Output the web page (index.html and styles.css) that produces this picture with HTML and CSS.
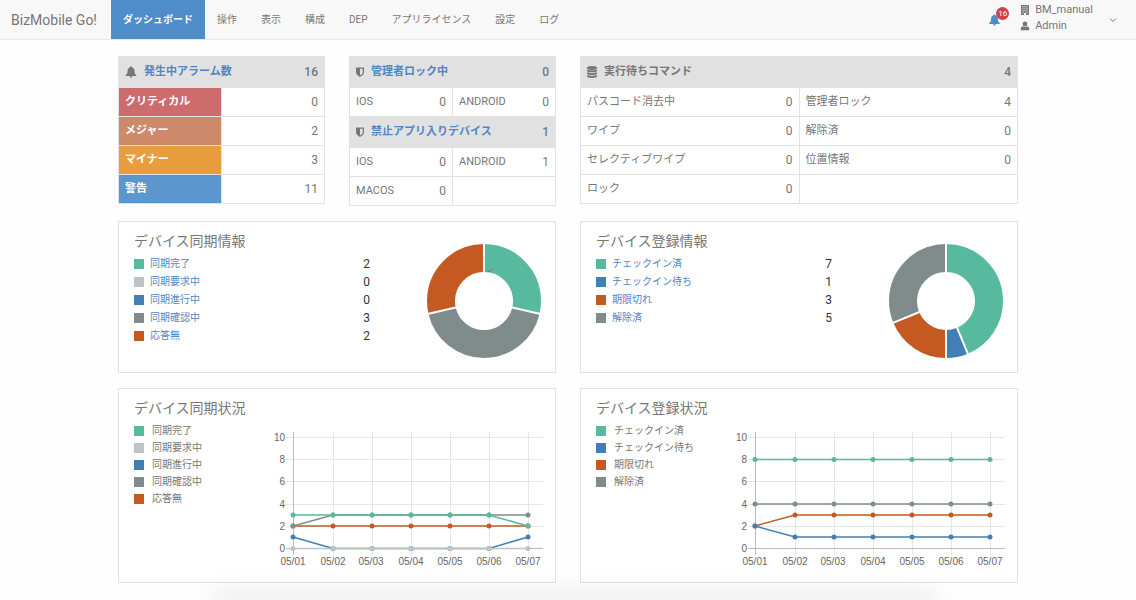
FILE: index.html
```html
<!DOCTYPE html>
<html lang="ja">
<head>
    <meta charset="UTF-8">
    <meta name="viewport" content="width=device-width, initial-scale=1.0">
    <title>BizMobile Go! ダッシュボード</title>
    <link rel="stylesheet" href="styles.css">
</head>
<body>
    <header class="header">
        <a href="#" class="brand">BizMobile Go!</a>
        <nav class="nav">
            <a href="#" class="active">ダッシュボード</a>
            <a href="#">操作</a>
            <a href="#">表示</a>
            <a href="#">構成</a>
            <a href="#">DEP</a>
            <a href="#">アプリライセンス</a>
            <a href="#">設定</a>
            <a href="#">ログ</a>
        </nav>
        <button type="button" class="bell" aria-label="アラーム">
            <svg width="11" height="12" viewBox="0 0 11 12"><path fill="#4f8cca" d="M5.5 0.3c.6 0 .9.4.9.9 1.7.4 2.5 1.700 2.500 3.400 0 2.200.5 3.500 1.900 4.600v.7H.2v-.7c1.400-1.100 1.900-2.400 1.900-4.600 0-1.700.8-3 2.500-3.400 0-.5.3-.9.9-.9zM4.100 10.300h2.800c0 .8-.6 1.400-1.400 1.400s-1.400-.6-1.400-1.400z"/></svg>
            <span class="badge">16</span>
        </button>
        <button type="button" class="user">
            <span class="user-names">
                <span class="user-row">
                    <svg width="10" height="10" viewBox="0 0 10 10"><path fill="#777" fill-rule="evenodd" d="M1 0h8v10H6V8H4v2H1zM2.500 1.200v1h1v-1zm2 0v1h1v-1zm2 0v1h1v-1zm-4 2v1h1v-1zm2 0v1h1v-1zm2 0v1h1v-1zm-4 2v1h1v-1zm2 0v1h1v-1zm2 0v1h1v-1zm-4 2v1h1v-1zm4 0v1h1v-1z"/></svg>
                    BM_manual
                </span>
                <span class="user-row">
                    <svg width="10" height="10" viewBox="0 0 10 10"><circle cx="5" cy="3" r="2.400" fill="#777"/><path fill="#777" d="M.8 9.300V7.800c0-1.500.9-2.500 2.200-2.500 1.200.9 2.800.9 4 0 1.300 0 2.200 1 2.200 2.500v1.500z"/></svg>
                    Admin
                </span>
            </span>
            <svg width="8" height="6" viewBox="0 0 8 6"><path d="M1 1.500l3 3 3-3" fill="none" stroke="#777"/></svg>
        </button>
    </header>

    <main class="dashboard">
        <div class="summary">
            <table class="counts alarms">
                <thead>
                    <tr>
                        <th scope="col" colspan="2">
                            <div class="head">
                                <svg width="12" height="12" viewBox="0 0 11 12"><path fill="#777" d="M5.5 0.3c.6 0 .9.4.9.9 1.7.4 2.5 1.700 2.500 3.400 0 2.200.5 3.500 1.900 4.600v.7H.2v-.7c1.400-1.100 1.900-2.400 1.900-4.600 0-1.700.8-3 2.500-3.400 0-.5.3-.9.9-.9zM4.100 10.300h2.800c0 .8-.6 1.400-1.400 1.400s-1.400-.6-1.400-1.400z"/></svg>
                                <a href="#">発生中アラーム数</a>
                                <span class="total">16</span>
                            </div>
                        </th>
                    </tr>
                </thead>
                <tbody>
                    <tr><th scope="row" class="critical">クリティカル</th><td class="num">0</td></tr>
                    <tr><th scope="row" class="major">メジャー</th><td class="num">2</td></tr>
                    <tr><th scope="row" class="minor">マイナー</th><td class="num">3</td></tr>
                    <tr><th scope="row" class="warning">警告</th><td class="num">11</td></tr>
                </tbody>
            </table>

            <table class="counts">
                <tbody>
                    <tr>
                        <th colspan="2">
                            <div class="head">
                                <svg width="8" height="10" viewBox="0 0 8 10"><path fill="#777" fill-rule="evenodd" d="M0 .5h8v4.800C8 7.600 6 9 4 10 2 9 0 7.600 0 5.300zM4 1.800v6.700c1.500-.9 2.700-1.800 2.700-3.200V1.800z"/></svg>
                                <a href="#">管理者ロック中</a>
                                <span class="total">0</span>
                            </div>
                        </th>
                    </tr>
                    <tr>
                        <td><div class="pair">IOS<span>0</span></div></td>
                        <td><div class="pair">ANDROID<span>0</span></div></td>
                    </tr>
                    <tr>
                        <th colspan="2">
                            <div class="head">
                                <svg width="8" height="10" viewBox="0 0 8 10"><path fill="#777" fill-rule="evenodd" d="M0 .5h8v4.800C8 7.600 6 9 4 10 2 9 0 7.600 0 5.300zM4 1.800v6.700c1.500-.9 2.700-1.800 2.700-3.200V1.800z"/></svg>
                                <a href="#">禁止アプリ入りデバイス</a>
                                <span class="total">1</span>
                            </div>
                        </th>
                    </tr>
                    <tr>
                        <td><div class="pair">IOS<span>0</span></div></td>
                        <td><div class="pair">ANDROID<span>1</span></div></td>
                    </tr>
                    <tr>
                        <td><div class="pair">MACOS<span>0</span></div></td>
                        <td></td>
                    </tr>
                </tbody>
            </table>
        </div>

        <table class="counts">
            <thead>
                <tr>
                    <th colspan="2">
                        <div class="head">
                            <svg width="10" height="12" viewBox="0 0 10 12"><g fill="#777"><ellipse cx="5" cy="2" rx="5" ry="1.900"/><path d="M0 3.200c1 1.500 9 1.500 10 0v1.500c0 2.100-10 2.100-10 0z"/><path d="M0 6c1 1.500 9 1.500 10 0v1.500c0 2.100-10 2.100-10 0z"/><path d="M0 8.800c1 1.500 9 1.500 10 0v1.500c0 2.100-10 2.100-10 0z"/></g></svg>
                            <span>実行待ちコマンド</span>
                            <span class="total">4</span>
                        </div>
                    </th>
                </tr>
            </thead>
            <tbody>
                <tr>
                    <td><div class="pair">パスコード消去中<span>0</span></div></td>
                    <td><div class="pair">管理者ロック<span>4</span></div></td>
                </tr>
                <tr>
                    <td><div class="pair">ワイプ<span>0</span></div></td>
                    <td><div class="pair">解除済<span>0</span></div></td>
                </tr>
                <tr>
                    <td><div class="pair">セレクティブワイプ<span>0</span></div></td>
                    <td><div class="pair">位置情報<span>0</span></div></td>
                </tr>
                <tr>
                    <td><div class="pair">ロック<span>0</span></div></td>
                    <td></td>
                </tr>
            </tbody>
        </table>

        <section class="panel">
            <div class="panel-text">
                <h2>デバイス同期情報</h2>
                <ul class="legend">
                    <li class="green"><a href="#">同期完了</a><span>2</span></li>
                    <li class="silver"><a href="#">同期要求中</a><span>0</span></li>
                    <li class="blue"><a href="#">同期進行中</a><span>0</span></li>
                    <li class="gray"><a href="#">同期確認中</a><span>3</span></li>
                    <li class="orange"><a href="#">応答無</a><span>2</span></li>
                </ul>
            </div>
            <svg class="donut" width="116" height="116" viewBox="-58 -58 116 116">
                <!-- pathLength = total devices -->
                <g transform="rotate(-90)" fill="none" stroke-width="28">
                    <circle r="43" pathLength="7" stroke="#57b99d" stroke-dasharray="2 5"/>
                    <circle r="43" pathLength="7" stroke="#808c8b" stroke-dasharray="3 4" stroke-dashoffset="-2"/>
                    <circle r="43" pathLength="7" stroke="#c45a22" stroke-dasharray="2 5" stroke-dashoffset="-5"/>
                </g>
                <g stroke="#fff" stroke-width="2">
                    <path d="M0-28V-58"/>
                    <path d="M0-28V-58" transform="rotate(102.857)"/>
                    <path d="M0-28V-58" transform="rotate(257.143)"/>
                </g>
            </svg>
        </section>

        <section class="panel">
            <div class="panel-text">
                <h2>デバイス登録情報</h2>
                <ul class="legend">
                    <li class="green"><a href="#">チェックイン済</a><span>7</span></li>
                    <li class="blue"><a href="#">チェックイン待ち</a><span>1</span></li>
                    <li class="orange"><a href="#">期限切れ</a><span>3</span></li>
                    <li class="gray"><a href="#">解除済</a><span>5</span></li>
                </ul>
            </div>
            <svg class="donut" width="116" height="116" viewBox="-58 -58 116 116">
                <g transform="rotate(-90)" fill="none" stroke-width="28">
                    <circle r="43" pathLength="16" stroke="#57b99d" stroke-dasharray="7 9"/>
                    <circle r="43" pathLength="16" stroke="#417fb5" stroke-dasharray="1 15" stroke-dashoffset="-7"/>
                    <circle r="43" pathLength="16" stroke="#c45a22" stroke-dasharray="3 13" stroke-dashoffset="-8"/>
                    <circle r="43" pathLength="16" stroke="#808c8b" stroke-dasharray="5 11" stroke-dashoffset="-11"/>
                </g>
                <g stroke="#fff" stroke-width="2">
                    <path d="M0-28V-58"/>
                    <path d="M0-28V-58" transform="rotate(157.5)"/>
                    <path d="M0-28V-58" transform="rotate(180)"/>
                    <path d="M0-28V-58" transform="rotate(247.5)"/>
                </g>
            </svg>
        </section>

        <section class="panel">
            <div class="panel-text">
                <h2>デバイス同期状況</h2>
                <ul class="legend series">
                    <li class="green">同期完了</li>
                    <li class="silver">同期要求中</li>
                    <li class="blue">同期進行中</li>
                    <li class="gray">同期確認中</li>
                    <li class="orange">応答無</li>
                </ul>
            </div>
            <svg class="chart" width="276" height="140" viewBox="0 0 276 140">
                <defs>
                    <g id="grid">
                        <path class="grid-line" d="M19 7.500H276M19 29.500H276M19 51.500H276M19 74.500H276M19 96.500H276M66.500 2V125M105.500 2V125M144.500 2V125M183.500 2V125M222.500 2V125M261.500 2V125"/>
                        <path class="axis" d="M26.500 2V125M19 118.500H276"/>
                        <g class="y-labels">
                            <text x="18" y="11">10</text>
                            <text x="18" y="33">8</text>
                            <text x="18" y="55">6</text>
                            <text x="18" y="78">4</text>
                            <text x="18" y="100">2</text>
                            <text x="18" y="122">0</text>
                        </g>
                        <g class="x-labels">
                            <text x="26" y="135">05/01</text>
                            <text x="66" y="135">05/02</text>
                            <text x="104" y="135">05/03</text>
                            <text x="144" y="135">05/04</text>
                            <text x="183" y="135">05/05</text>
                            <text x="222" y="135">05/06</text>
                            <text x="261" y="135">05/07</text>
                        </g>
                    </g>
                    <marker id="dot-green" markerUnits="userSpaceOnUse" markerWidth="6" markerHeight="6" refX="3" refY="3"><circle cx="3" cy="3" r="2.500" fill="#57b99d"/></marker>
                    <marker id="dot-silver" markerUnits="userSpaceOnUse" markerWidth="6" markerHeight="6" refX="3" refY="3"><circle cx="3" cy="3" r="2.500" fill="#bec3c7"/></marker>
                    <marker id="dot-blue" markerUnits="userSpaceOnUse" markerWidth="6" markerHeight="6" refX="3" refY="3"><circle cx="3" cy="3" r="2.500" fill="#417fb5"/></marker>
                    <marker id="dot-gray" markerUnits="userSpaceOnUse" markerWidth="6" markerHeight="6" refX="3" refY="3"><circle cx="3" cy="3" r="2.500" fill="#808c8b"/></marker>
                    <marker id="dot-orange" markerUnits="userSpaceOnUse" markerWidth="6" markerHeight="6" refX="3" refY="3"><circle cx="3" cy="3" r="2.500" fill="#c45a22"/></marker>
                </defs>
                <use href="#grid"/>
                <polyline class="line line-orange" points="26,96 66,96 105,96 144,96 183,96 222,96 261,96"/>
                <polyline class="line line-gray" points="26,96 66,85 105,85 144,85 183,85 222,85 261,85"/>
                <polyline class="line line-blue" points="26,107 66,118.500 105,118.500 144,118.500 183,118.500 222,118.500 261,107"/>
                <polyline class="line line-silver" points="26,118.500 66,118.500 105,118.500 144,118.500 183,118.500 222,118.500 261,118.500"/>
                <polyline class="line line-green" points="26,85 66,85 105,85 144,85 183,85 222,85 261,96"/>
            </svg>
        </section>

        <section class="panel">
            <div class="panel-text">
                <h2>デバイス登録状況</h2>
                <ul class="legend series">
                    <li class="green">チェックイン済</li>
                    <li class="blue">チェックイン待ち</li>
                    <li class="orange">期限切れ</li>
                    <li class="gray">解除済</li>
                </ul>
            </div>
            <svg class="chart" width="276" height="140" viewBox="0 0 276 140">
                <use href="#grid"/>
                <polyline class="line line-gray" points="26,74 66,74 105,74 144,74 183,74 222,74 261,74"/>
                <polyline class="line line-orange" points="26,96 66,85 105,85 144,85 183,85 222,85 261,85"/>
                <polyline class="line line-blue" points="26,96 66,107 105,107 144,107 183,107 222,107 261,107"/>
                <polyline class="line line-green" points="26,29.500 66,29.500 105,29.500 144,29.500 183,29.500 222,29.500 261,29.500"/>
            </svg>
        </section>
    </main>
    <div class="bottom-shadow"></div>
</body>
</html>
```

FILE: styles.css
```css
* {
    box-sizing: border-box;
}
body {
    margin: 0;
    background: #fefefe;
    color: #777;
    font-family: Roboto, "Noto Sans CJK JP", sans-serif;
    font-size: 11px;
    line-height: 16px;
}
a {
    color: #4f86c6;
    text-decoration: none;
}
svg {
    flex: none;
}
button {
    border: 0;
    padding: 0;
    background: none;
    color: inherit;
    font: inherit;
    cursor: pointer;
}

/* header */
.header {
    display: flex;
    align-items: center;
    height: 40px;
    padding-right: 19px;
    background: #f8f8f8;
    border-bottom: 1px solid #e9e9e9;
}
.brand {
    padding: 0 14px 0 11px;
    color: #777;
    font-size: 14px;
}
.nav {
    display: flex;
    flex: 1;
    align-self: stretch;
}
.nav a {
    display: flex;
    align-items: center;
    padding: 0 12px;
    color: #777;
    font-size: 10px;
}
.nav a.active {
    background: #4f8cca;
    color: #fff;
    font-weight: bold;
}
.bell {
    position: relative;
    display: flex;
    margin-right: 20px;
}
.badge {
    position: absolute;
    left: 7px;
    top: -7px;
    width: 13px;
    height: 13px;
    border-radius: 50%;
    background: #d43f45;
    color: #fff;
    font-size: 8px;
    line-height: 13px;
    text-align: center;
}
.user {
    display: flex;
    align-items: center;
    gap: 16px;
}
.user-names {
    padding-bottom: 4px;
}
.user-row {
    display: flex;
    align-items: center;
    gap: 5px;
}

/* dashboard */
.dashboard {
    display: grid;
    grid-template-columns: repeat(2, minmax(0, 1fr));
    align-items: start;
    gap: 15px 24px;
    max-width: 900px;
    margin: 16px auto;
}
.summary {
    display: grid;
    grid-template-columns: repeat(2, minmax(0, 1fr));
    align-items: start;
    gap: 24px;
}
.counts {
    width: 100%;
    table-layout: fixed;
    border-collapse: collapse;
    background: #fff;
}
.counts th,
.counts td {
    height: 29px;
    padding: 0 6px;
    border: 1px solid #e2e2e2;
    text-align: left;
}
.counts th[colspan] {
    height: 31px;
    background: #e1e1e1;
}
.counts .num {
    text-align: right;
    font-size: 12px;
}
.head {
    display: flex;
    align-items: center;
    gap: 7px;
}
.pair {
    display: flex;
    justify-content: space-between;
}
.pair span,
.total {
    font-size: 12px;
}
.total {
    margin-left: auto;
    font-weight: 500;
}
.alarms tbody th {
    color: #fff;
}
.critical {
    background: #cd6c6d;
}
.major {
    background: #cd8a6a;
}
.minor {
    background: #e89e3e;
}
.warning {
    background: #5c96cf;
}

/* panels */
.panel {
    display: flex;
    padding: 9px 12px 12px 15px;
    background: #fff;
    border: 1px solid #e2e2e2;
}
.panel-text {
    flex: 1;
}
.panel h2 {
    margin: 0 0 4px;
    font-size: 14px;
    font-weight: normal;
    line-height: 20px;
}
.legend {
    margin: 0;
    padding: 0;
    list-style: none;
    font-size: 10px;
    line-height: 18px;
}
.legend li {
    display: flex;
    align-items: center;
    gap: 6px;
}
.legend li::before {
    content: "";
    width: 10px;
    height: 10px;
}
.legend span {
    margin-left: auto;
    color: #333;
    font-size: 12px;
}
.series {
    line-height: 17px;
}
.series li {
    gap: 8px;
}
.green::before {
    background: #57b99d;
}
.silver::before {
    background: #bec3c7;
}
.blue::before {
    background: #417fb5;
}
.gray::before {
    background: #808c8b;
}
.orange::before {
    background: #c45a22;
}
.donut {
    margin: 12px 1px 1px 56px;
}
.chart {
    margin-top: 32px;
    fill: #666;
    font-family: "Liberation Sans", Arial, sans-serif;
    font-size: 10px;
}
.grid-line {
    stroke: #e5e5e5;
}
.axis {
    stroke: #bbb;
}
.y-labels {
    text-anchor: end;
}
.x-labels {
    text-anchor: middle;
}
.line {
    fill: none;
    stroke-width: 1.5;
}
.line-green {
    stroke: #57b99d;
    marker: url(#dot-green);
}
.line-silver {
    stroke: #bec3c7;
    marker: url(#dot-silver);
}
.line-blue {
    stroke: #417fb5;
    marker: url(#dot-blue);
}
.line-gray {
    stroke: #808c8b;
    marker: url(#dot-gray);
}
.line-orange {
    stroke: #c45a22;
    marker: url(#dot-orange);
}

.bottom-shadow {
    position: fixed;
    left: 19%;
    right: 18%;
    bottom: 0;
    box-shadow: 0 0 24px 4px rgba(0, 0, 0, 0.18);
    pointer-events: none;
}
```
